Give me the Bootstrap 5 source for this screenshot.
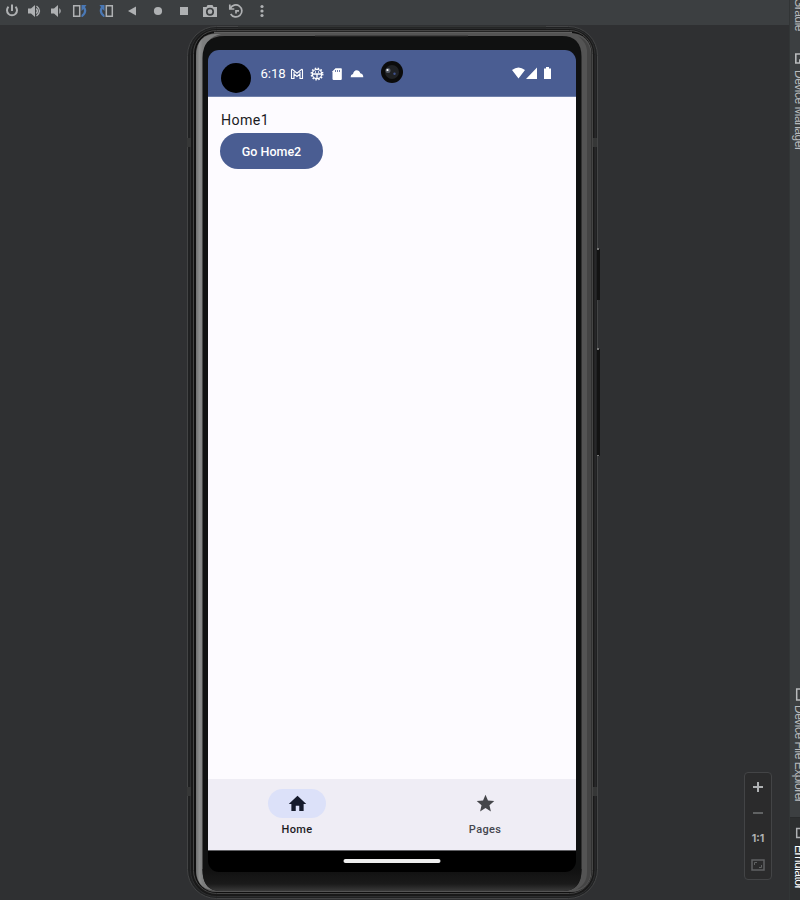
<!DOCTYPE html>
<html lang="en">
<head>
<meta charset="utf-8">
<title>Emulator</title>
<link href="https://cdn.jsdelivr.net/npm/bootstrap@5.3.0/dist/css/bootstrap.min.css" rel="stylesheet">
<style>
body{width:800px;height:900px;background:#2f3032;font-family:Roboto,sans-serif;overflow:hidden}
svg{display:block;flex:none}
.main-pane{width:789px}
.tool-strip{height:25px;background:#3c3f41;color:#afb1b3}
.tool-strip>span{display:flex;justify-content:center;padding-top:3px}
.w20{width:20px}.w24{width:24px}.w28{width:28px}
.side-tabs{width:11px;background:#3c3f41;border-left:1px solid #323536;overflow:hidden;color:#b8babc}
.vtext{writing-mode:vertical-rl;font:12px/16px "Liberation Sans",sans-serif;white-space:nowrap;margin-left:1px;letter-spacing:-.5px}
.tab-item{width:18px}
.tab-on{background:#2d2f30;color:#fff;height:83px;border-top:1px solid #292b2c}
.phone{width:413px;height:874px;margin-left:187px;padding:25px 24px 27px 21px}
.bezel{left:0;top:0}
.screen{width:368px;height:822px;border-radius:11px;background:#000}
.status{height:47px;background:#4a5d92;border-bottom:1px solid #7080aa;padding-left:12.5px}
.lens-dot{width:30px;height:30px;background:#000;margin-top:10px}
.time{font-size:13.2px;width:24px;margin:2px 0 0 10px;white-space:nowrap;letter-spacing:-.1px}
.st-icon{margin:1px 0 0 4px}
.camera{margin:0 0 3px 15.500px}
.page-body{height:682px;background:#fdfbff;padding:13px 12px;color:#1b1b1f}
.title-text{font-size:14.2px;line-height:21px;letter-spacing:.4px;padding-left:1px;height:23px}
.btn-go,.btn-go:hover{width:103px;height:36px;background:#4a5d92;color:#fff;border:0;font-size:12.5px;font-weight:500;padding:2px 0 0;letter-spacing:0}
.bottom-nav{height:72px;background:#efedf5;border-bottom:1px solid #606064;padding:10px 2px 0 0;font-size:11px;font-weight:500;letter-spacing:.32px;color:#1b1b1f}
.nav-cell{width:178px;line-height:14px}
.nav-off{color:#45464f}
.pill-bg{width:58px;height:29px;margin-bottom:5px}
.pill-on{background:#dce1f9}
.gesture{width:97px;height:4px;background:#eee;margin-top:8px;transform:translateX(-.5px)}
.zoom-box{width:28px;height:108px;border:1px solid #434446;border-radius:4px;background:#2b2b2c;margin:772px 17px 0 auto;color:#afb1b3}
.zoom-box>*{height:26px;display:flex;align-items:center;padding-top:2px}
.ratio{font:bold 10.500px/24px Inter,sans-serif}
</style>
<script src="https://cdn.jsdelivr.net/npm/bootstrap@5.3.0/dist/js/bootstrap.bundle.min.js"></script>
</head>
<body class="d-flex m-0">
<main class="main-pane d-flex flex-column position-relative">
<div class="tool-strip d-flex">
<span class="w24"><svg width="16" height="16" fill="none" stroke="currentColor" stroke-width="2"><path d="M4.500 3.800a5 5 0 1 0 7 0M8 1.500v6.500"/></svg></span>
<span class="w20"><svg width="16" height="16" fill="currentColor"><path d="M2 5.500h3L9 2v12l-4-3.500H2z"/><path d="M10.300 5.500q2.300 2.500 0 5M10.500 3q6 5 0 10" fill="none" stroke="currentColor" stroke-width="1.400"/></svg></span>
<span class="w24"><svg width="16" height="16" fill="currentColor"><path d="M3 5.500h3L10 2v12l-4-3.500H3zM11.300 5q3 3 0 6z"/></svg></span>
<span class="w24"><svg width="16" height="16" fill="none"><path d="M1.700 2.700h6v10.600h-6z" stroke="#afb1b3" stroke-width="1.500"/><path d="M9.500 2H14.500L13 4q3.500 5-2.500 10H9.500v-2q3.500-2.500 2-6L9.500 8z" fill="#4a78b5"/></svg></span>
<span class="w28"><svg width="16" height="16" fill="none"><path d="M8.300 2.700h6v10.600h-6z" stroke="#afb1b3" stroke-width="1.500"/><path d="M6.500 2H1.500L3 4q-3.500 5 2.500 10H6.500v-2q-3.500-2.500-2-6L6.500 8z" fill="#4a78b5"/></svg></span>
<span class="w24"><svg width="16" height="16"><path d="M4 8l8-4.500v9z" fill="currentColor"/></svg></span>
<span class="w28"><svg width="16" height="16"><circle cx="8" cy="8" r="4.100" fill="currentColor"/></svg></span>
<span class="w24"><svg width="16" height="16"><path d="M4 4h8v8H4z" fill="currentColor"/></svg></span>
<span class="w28"><svg width="16" height="16"><path d="M1 4h3.500l1-2h5l1 2H15v10H1z" fill="currentColor"/><circle cx="8" cy="8.700" r="3.200" fill="none" stroke="#3c3f41" stroke-width="1.700"/></svg></span>
<span class="w24"><svg width="16" height="16" fill="none" stroke="currentColor" stroke-width="1.700"><path d="M1.800 1.500v4.500H6.300M2.400 5.500a6 6 0 1 1 .3 5.500"/><path d="M8 10.500V7.800h3"/></svg></span>
<span class="w28"><svg width="16" height="16" fill="currentColor"><circle cx="8" cy="3.500" r="1.600"/><circle cx="8" cy="8" r="1.600"/><circle cx="8" cy="12.500" r="1.600"/></svg></span>
</div>
<div class="phone position-relative">
<svg class="bezel position-absolute" width="413" height="874" viewBox="187 25 413 874" fill="none">
<defs>
<linearGradient id="rim" x1="196" x2="203" y1="0" y2="0" gradientUnits="userSpaceOnUse"><stop stop-color="#6e6f6f"/><stop offset=".5" stop-color="#8c8d8d"/><stop offset="1" stop-color="#7c7d7d"/></linearGradient>
<linearGradient id="low" x1="0" x2="0" y1="870" y2="893" gradientUnits="userSpaceOnUse"><stop stop-color="#111"/><stop offset=".6" stop-color="#1a1a1a"/><stop offset="1" stop-color="#424242"/></linearGradient>
</defs>
<rect x="187.500" y="26.500" width="410" height="872" rx="29" fill="#202122" stroke="#434445"/>
<rect x="190.500" y="28.500" width="404.500" height="868" rx="26" fill="#191919" stroke="#2e2f30"/>
<rect x="193.500" y="30.500" width="399" height="863" rx="23" fill="#101010" stroke="#454545"/>
<path d="M214 32.800H572" stroke="#606060" stroke-width="2"/>
<rect x="196" y="33" width="395.500" height="859" rx="20" fill="#545454"/>
<path d="M196 56q1-22 20-22h5q-16 3-18 22v815q0 15 9 19q-16-2-16-22z" fill="url(#rim)"/>
<path d="M587 50v822q0 13-12 18h-4q20 0 20-22V57q0-16-13-21q8 6 9 14z" fill="#444"/>
<path d="M202.500 58q0-22 22-22H562q19.500 0 19.500 21V870q0 21-19 21H221q-18.500 0-18.500-21z" fill="#101111"/>
<path d="M202.500 869H581.500q0 22-19 22H221q-18.500 0-18.500-22z" fill="url(#low)"/>
<path d="M187 138h4v9h-4zM187 787h4v9h-4zM593 138h4v9h-4zM593 787h4v9h-4z" fill="#363737"/>
<path d="M597 249h3v51h-3zM597 349h3v107h-3z" fill="#131313"/>
<path d="M597 248h2v2h-2zM597 348h2v2h-2zM597 455h2v1h-2z" fill="#777"/>
<path d="M238 27.500H546" stroke="#252626" stroke-width="2"/>
<path d="M315 36H468" stroke="#2e2e2e"/>
</svg>
<div class="screen position-relative overflow-hidden">
<div class="status d-flex align-items-center text-white">
<span class="lens-dot rounded-circle"></span><span class="time">6:18</span>
<svg class="st-icon" width="16" height="16" viewBox="0 0 16 16" fill="none" stroke="#fff"><path d="M2.500 12.500V4.500Q2.500 2.500 4.200 4L8 7.200 11.800 4Q13.500 2.500 13.500 4.500v8H11V8L8 10.500 5 8v4.500zM5 8V4.700M11 8V4.700" stroke-width="1.100"/></svg>
<svg class="st-icon" width="16" height="16" viewBox="0 0 16 16" fill="none" stroke="#fff"><circle cx="8" cy="8" r="4.700" stroke-width="1.300"/><circle cx="8" cy="8" r="5.800" stroke-width="1.400" stroke-dasharray="1.500 1.537"/><path d="M3.500 8h9M8 8v4.500M6 6h1M9 6h1" stroke-width="1.300"/></svg>
<svg class="st-icon" width="16" height="16" viewBox="0 0 16 16"><path d="M6.500 2.300H12q.8 0 .8.800v10q0 .8-.8.800H4.300q-.8 0-.8-.8V5.300z" fill="#fff"/><path d="M6.500 4v2M8.500 4v2M10.500 4v2" stroke="#4a5d92" stroke-width=".8"/></svg>
<svg class="st-icon" width="16" height="16" viewBox="0 0 16 16"><path d="M1.600 11.300q0-2.900 2.400-3.300Q5 4.300 7.500 4.300q3 0 3.800 3 3 .4 3 4z" fill="#fff"/></svg>
<svg class="camera" width="24" height="24"><circle cx="12" cy="12" r="11" fill="#0b0b0b"/><circle cx="12" cy="12" r="7" fill="#202225"/><circle cx="8" cy="10.500" r="2.500" fill="#555b66"/><circle cx="7.500" cy="10" r="1.100" fill="#fff"/><circle cx="14.500" cy="13.700" r="1.200" fill="#40538e"/></svg>
<svg class="ms-auto me-4" width="41" height="16" fill="#fff"><path d="M1 5q6.500-5 13 0L7.500 13.500zM26 2.500v11.500H15zM33 3.500h2v-1.500h3v1.500h2v10.500h-7z"/></svg>
</div>
<div class="page-body">
<div class="title-text">Home1</div>
<button class="btn btn-go rounded-pill" type="button">Go Home2</button>
</div>
<nav class="bottom-nav d-flex justify-content-between">
<div class="nav-cell d-flex flex-column align-items-center"><span class="pill-bg pill-on rounded-pill d-flex align-items-center justify-content-center"><svg width="21" height="21" viewBox="0 0 24 24" fill="#161b2c"><path d="M10 20.500v-6h4v6h5v-8h3L12 3 2 12.500h3v8z"/></svg></span><span>Home</span></div>
<div class="nav-cell nav-off d-flex flex-column align-items-center"><span class="pill-bg d-flex align-items-center justify-content-center"><svg width="21" height="21" viewBox="0 0 24 24" fill="#45464a"><path d="M12 17.270 18.180 21l-1.640-7.030L22 9.240l-7.190-.61L12 2 9.190 8.630 2 9.240l5.460 4.730L5.820 21z"/></svg></span><span>Pages</span></div>
</nav>
<div class="gesture rounded-pill mx-auto"></div>
</div>
</div>
<div class="position-absolute end-0 top-0"><div class="zoom-box">
<span class="justify-content-center"><svg width="12" height="12"><path d="M6 1v10M1 6h10" stroke="#afb1b3" stroke-width="2"/></svg></span>
<span class="justify-content-center"><svg width="12" height="12"><path d="M1 6h10" stroke="#606263" stroke-width="2"/></svg></span>
<span class="justify-content-center ratio">1:1</span>
<span class="justify-content-center"><svg width="14" height="12" fill="none" stroke="#606263"><path d="M1 1h12v10H1z" stroke-width="1.500"/><path d="M3.500 6V3.500H6M10.500 6v2.500H8"/></svg></span>
</div></div>
</main>
<aside class="side-tabs d-flex flex-column">
<div class="tab-item" style="height:52px"><span class="vtext d-block" style="margin-top:-2px">Gradle</span></div>
<div class="tab-item" style="height:636px"><svg width="16" height="16" fill="none" stroke="currentColor" stroke-width="1.600"><path d="M13 2H5.800v9h4V8H14"/></svg><span class="vtext d-block" style="margin-top:2px">Device Manager</span></div>
<div class="tab-item" style="height:129px"><svg width="16" height="16" fill="none" stroke="currentColor" stroke-width="1.500"><path d="M14 1H6.700v11H14"/></svg><span class="vtext d-block" style="margin-top:1px">Device File Explorer</span></div>
<div class="tab-item tab-on pt-2"><svg width="16" height="16" fill="none" stroke="#afb1b3" stroke-width="1.500"><path d="M14 2.500H6.700v9H14"/></svg><span class="vtext d-block" style="margin-top:3px">Emulator</span></div>
</aside>
</body>
</html>
